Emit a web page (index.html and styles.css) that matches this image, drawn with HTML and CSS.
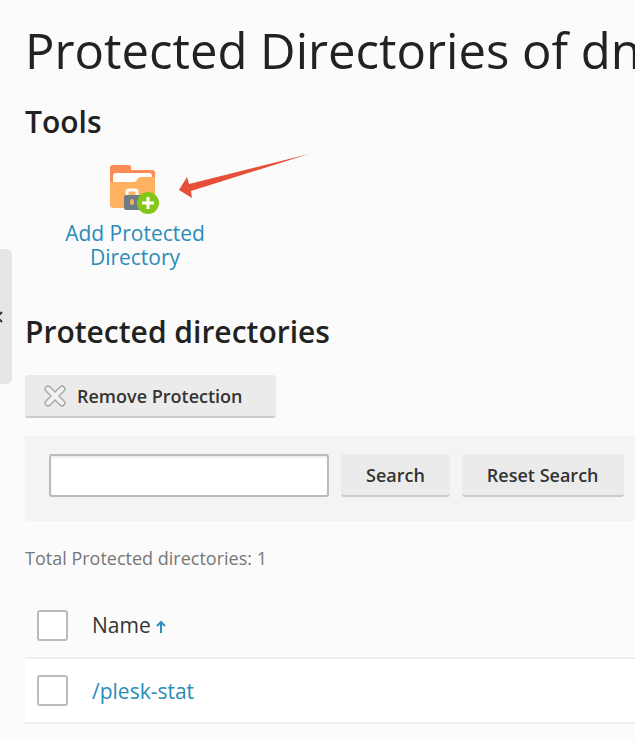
FILE: index.html
```
<!DOCTYPE html>
<html lang="en">
<head>
<meta charset="UTF-8">
<meta name="viewport" content="width=device-width, initial-scale=1.0">
<title>Protected Directories</title>
<link rel="stylesheet" href="styles.css">
</head>
<body>
<button type="button" class="sidebar-toggle" aria-label="Hide sidebar">
    <svg width="6" height="14" viewBox="0 0 6 14"><path d="M2 2 L-3 7 L2 12" fill="none" stroke="#333" stroke-width="2"/></svg>
</button>

<main class="page">
    <h1 class="page-title">Protected Directories of dn</h1>

    <section class="tools">
        <h2>Tools</h2>
        <a href="#" class="tool">
            <svg class="tool-icon" width="50" height="50" viewBox="0 0 50 50">
                <path d="M0 3 Q0 0 3 0 H19 Q21 0 21 2 V5 H42 Q45 5 45 8 V34 H0 Z" fill="#fb8c55"/>
                <path d="M3 18 V11 Q3 8 6 8 H39 Q42 8 42 11 V18 Z" fill="#fff"/>
                <path d="M0 17 H23 Q26 17 27 15 Q28 12 31 12 H45 V40 Q45 43 42 43 H3 Q0 43 0 40 Z" fill="#ffb060"/>
                <path d="M17 31 V27 Q17 25 19 25 H25 Q27 25 27 27 V31" fill="none" stroke="#fff" stroke-width="3"/>
                <rect x="14" y="30" width="17" height="15" rx="2" fill="#6d7c85"/>
                <ellipse cx="22" cy="37" rx="2" ry="3" fill="#ffb060"/>
                <circle cx="38" cy="38" r="11" fill="#82c714"/>
                <path d="M38 32 V44 M32 38 H44" stroke="#fff" stroke-width="3"/>
            </svg>
            <span>Add Protected Directory</span>
        </a>
        <!-- arrow pointing at the tool -->
        <svg class="pointer" width="132" height="48" viewBox="0 0 132 48">
            <path d="M0 36 L8 23 L10 30 L130 0 L12 37 L13 44 Z" fill="#e64f38"/>
        </svg>
    </section>

    <section class="directories">
        <h2>Protected directories</h2>
        <button type="button" class="btn btn-remove">
            <svg width="22" height="22" viewBox="0 0 22 22">
                <path d="M2 2 Q4 0 6 2 L11 7 L16 2 Q18 0 20 2 Q22 4 20 6 L15 11 L20 16 Q22 18 20 20 Q18 22 16 20 L11 15 L6 20 Q4 22 2 20 Q0 18 2 16 L7 11 L2 6 Q0 4 2 2 Z" fill="#f2f2f2" stroke="#aaa" stroke-width="1.500"/>
            </svg>
            Remove Protection
        </button>

        <form class="search-box">
            <input type="text" class="search-input" name="search" aria-label="Search directories">
            <button type="submit" class="btn">Search</button>
            <button type="reset" class="btn">Reset Search</button>
        </form>

        <p class="total">Total Protected directories: 1</p>

        <table class="list">
            <thead>
                <tr>
                    <th class="col-check"><input type="checkbox" class="check" aria-label="Select all"></th>
                    <th>
                        <a href="#" class="sort">Name
                            <svg width="10" height="13" viewBox="0 0 10 13"><path d="M5 13 V2 M1 6 L5 2 L9 6" fill="none" stroke="#2a94bd" stroke-width="2"/></svg>
                        </a>
                    </th>
                </tr>
            </thead>
            <tbody>
                <tr>
                    <td class="col-check"><input type="checkbox" class="check" aria-label="Select /plesk-stat"></td>
                    <td><a href="#">/plesk-stat</a></td>
                </tr>
            </tbody>
        </table>
    </section>
</main>
</body>
</html>
```

FILE: styles.css
```
* {
    box-sizing: border-box;
}
body {
    margin: 0;
    font-family: "Open Sans", sans-serif;
    font-size: 21px;
    line-height: 24px;
    color: #222;
    background-color: #fbfbfb;
    overflow-x: hidden;
}
a {
    color: #2a8cb8;
    text-decoration: none;
}
.page {
    padding: 16px 0 0 25px;
}
.page-title {
    margin: 0 0 20px;
    font-size: 49px;
    font-weight: 400;
    line-height: 68px;
    white-space: nowrap;
}
h2 {
    margin: 0;
    font-size: 30px;
    font-weight: 600;
    line-height: 36px;
}
.sidebar-toggle {
    position: absolute;
    left: 0;
    top: 249px;
    display: flex;
    align-items: center;
    width: 12px;
    height: 135px;
    padding: 0;
    border: none;
    border-radius: 0 6px 6px 0;
    background-color: #e6e6e6;
}
.tools {
    position: relative;
    margin-bottom: 45px;
}
.tool {
    display: flex;
    flex-direction: column;
    align-items: center;
    gap: 6px;
    width: 220px;
    padding: 25px 30px 0;
    text-align: center;
}
.pointer {
    position: absolute;
    left: 154px;
    top: 50px;
}
.btn {
    height: 43px;
    padding: 0 25px;
    border: none;
    border-bottom: 2px solid #ccc;
    border-radius: 3px;
    background-color: #ebebeb;
    color: #333;
    font-family: inherit;
    font-size: 18px;
    font-weight: 600;
    white-space: nowrap;
}
.btn-remove {
    display: flex;
    align-items: center;
    gap: 11px;
    margin-top: 25px;
    padding: 0 33px 0 19px;
}
.search-box {
    display: flex;
    gap: 12px;
    margin-top: 18px;
    padding: 18px 9px 24px 24px;
    background-color: #f4f4f4;
}
.search-input {
    flex: 1;
    min-width: 0;
    max-width: 280px;
    height: 43px;
    padding: 0 10px;
    border: 2px solid #bbb;
    border-radius: 3px;
    background-color: #fff;
    box-shadow: inset 0 2px 2px #eee;
    font: inherit;
}
.total {
    margin: 25px 0 23px;
    color: #777;
    font-size: 18px;
}
.list {
    width: 100%;
    border-collapse: collapse;
}
.list th,
.list td {
    height: 65px;
    padding: 0;
    border-bottom: 2px solid #eee;
    font-weight: 400;
    text-align: left;
}
.list td {
    background-color: #fff;
}
.list .col-check {
    width: 67px;
    padding-left: 12px;
}
.check {
    display: block;
    appearance: none;
    width: 31px;
    height: 31px;
    margin: 0;
    border: 2px solid #bbb;
    border-radius: 3px;
    background-color: #fff;
}
.sort {
    color: #333;
}
```
